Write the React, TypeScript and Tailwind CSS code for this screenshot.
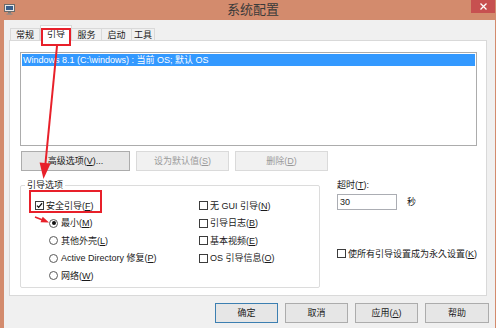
import React from "react";

const FONT = "font-['Liberation_Sans','Noto_Sans_CJK_SC',sans-serif]";

function U({ children }: { children: React.ReactNode }) {
  return <span className="underline underline-offset-[1px]">{children}</span>;
}

function Btn({
  children,
  w,
  disabled,
  focused,
}: {
  children: React.ReactNode;
  w: string;
  disabled?: boolean;
  focused?: boolean;
}) {
  let cls = "border-[#acacac] bg-[#e6e6e6] text-[#1a1a1a]";
  if (disabled) cls = "border-[#dadada] bg-[#f1f1f1] text-[#9a9a9a]";
  if (focused) cls = "border-[#3c7fb1] bg-[#e6e6e6] text-[#1a1a1a]";
  return (
    <div className={`${w} h-[20px] border ${cls} flex items-center justify-center`}>
      {children}
    </div>
  );
}

function CheckBox({ checked, children }: { checked?: boolean; children: React.ReactNode }) {
  return (
    <div className="flex items-center h-[17.5px] whitespace-nowrap">
      <span className="w-[9px] h-[9px] border border-[#3c3c3c] bg-white flex items-center justify-center shrink-0">
        {checked && (
          <svg width="9" height="9" viewBox="0 0 9 9">
            <path d="M1.2 4.6 L3.4 6.8 L7.8 1.6" stroke="#111" strokeWidth="1.6" fill="none" />
          </svg>
        )}
      </span>
      <span className="ml-[2px]">{children}</span>
    </div>
  );
}

function Radio({ checked, children }: { checked?: boolean; children: React.ReactNode }) {
  return (
    <div className="flex items-center h-[17.5px] whitespace-nowrap">
      <span className="w-[9px] h-[9px] rounded-full border border-[#5a5a5a] bg-white flex items-center justify-center shrink-0">
        {checked && <span className="w-[4px] h-[4px] rounded-full bg-[#111]" />}
      </span>
      <span className="ml-[3px]">{children}</span>
    </div>
  );
}

const TABS = [
  { label: "常规", w: "w-[30px]" },
  { label: "引导", w: "w-[32px]", active: true },
  { label: "服务", w: "w-[31px]" },
  { label: "启动", w: "w-[31px]" },
  { label: "工具", w: "w-[24px]" },
];

export default function App() {
  return (
    <div className={`relative w-[496px] h-[328px] overflow-hidden bg-[#d38b6d] ${FONT} text-[9px] leading-[12px] text-[#1a1a1a]`}>
      {/* title bar */}
      <div className="h-[20px] grid grid-cols-[1fr_auto_1fr] items-start">
        <div className="pl-[4px] pt-[4px]">
          <svg width="11" height="11" viewBox="0 0 11 11">
            <rect x="0.5" y="0.5" width="10" height="7" fill="#e8e8e8" stroke="#6b6b6b" />
            <rect x="2" y="2" width="7" height="4" fill="#3a5f8a" />
            <rect x="4" y="8" width="3" height="1.5" fill="#7a7a7a" />
            <rect x="2.5" y="9.5" width="6" height="1.2" fill="#8a8a8a" />
          </svg>
        </div>
        <div className="pl-[10px] pt-[3px] text-[13px] leading-[14px] text-[#3a3a3a]">系统配置</div>
        <div className="flex justify-end pr-[1px]">
          <div className="w-[24px] h-[13px] bg-[#c75050] flex items-center justify-center">
            <svg width="7" height="7" viewBox="0 0 7 7">
              <path d="M0.5 0.5 L6.5 6.5 M6.5 0.5 L0.5 6.5" stroke="#fff" strokeWidth="1.3" />
            </svg>
          </div>
        </div>
      </div>

      {/* client */}
      <div className="ml-[4px] mr-[1px] h-[308px] bg-[#f0f0f0] flex flex-col">
        {/* tabs */}
        <div className="flex items-end pl-[6px] pt-[5px] h-[20px] relative z-10">
          {TABS.map((t) =>
            t.active ? (
              <div
                key={t.label}
                className={`${t.w} h-[16px] -mb-px bg-white border border-b-0 border-[#d9d9d9] flex items-start justify-center pt-[2px]`}
              >
                {t.label}
              </div>
            ) : (
              <div
                key={t.label}
                className={`${t.w} h-[12px] bg-[#f0f0f0] border border-b-0 border-[#d9d9d9] -ml-px first:ml-0 flex items-center justify-center`}
              >
                {t.label}
              </div>
            )
          )}
        </div>

        {/* tab page */}
        <div className="ml-[5px] w-[478px] h-[256px] bg-white border border-[#d9d9d9] pl-[10px] pr-[9px] pt-[11px] flex flex-col">
          <div className="h-[94px] border border-[#acacac] bg-white p-[1px]">
            <div className="h-[12px] bg-[#3399ff] text-white pl-[1px] flex items-center">
              Windows 8.1 (C:\windows) : 当前 OS; 默认 OS
            </div>
          </div>

          <div className="mt-[5px] flex gap-[6px] pl-[1px]">
            <Btn w="w-[109px]">
              高级选项(<U>V</U>)...
            </Btn>
            <Btn w="w-[93px]" disabled>
              设为默认值(<U>S</U>)
            </Btn>
            <Btn w="w-[93px]" disabled>
              删除(<U>D</U>)
            </Btn>
          </div>

          <div className="mt-[8px] flex">
            <fieldset className="w-[308px] h-[109px] border border-[#dcdcdc] rounded-[2px] px-[14px]">
              <legend className="ml-[-10px] px-[2px] leading-[12px]">引导选项</legend>
              <div className="flex mt-[6px]">
                <div className="w-[164px]">
                  <CheckBox checked>
                    安全引导(<U>F</U>)
                  </CheckBox>
                  <div className="pl-[14px]">
                    <Radio checked>
                      最小(<U>M</U>)
                    </Radio>
                    <Radio>
                      其他外壳(<U>L</U>)
                    </Radio>
                    <Radio>
                      Active Directory 修复(<U>P</U>)
                    </Radio>
                    <Radio>
                      网络(<U>W</U>)
                    </Radio>
                  </div>
                </div>
                <div>
                  <CheckBox>
                    无 GUI 引导(<U>N</U>)
                  </CheckBox>
                  <CheckBox>
                    引导日志(<U>B</U>)
                  </CheckBox>
                  <CheckBox>
                    基本视频(<U>E</U>)
                  </CheckBox>
                  <CheckBox>
                    OS 引导信息(<U>O</U>)
                  </CheckBox>
                </div>
              </div>
            </fieldset>

            <div className="ml-[17px] flex flex-col">
              <div>
                超时(<U>T</U>):
              </div>
              <div className="mt-[3px] flex items-center">
                <div className="w-[60px] h-[16px] border border-[#abadb3] bg-white pl-[2px] flex items-center">30</div>
                <span className="ml-[10px]">秒</span>
              </div>
              <div className="mt-[35px]">
                <CheckBox>
                  使所有引导设置成为永久设置(<U>K</U>)
                </CheckBox>
              </div>
            </div>
          </div>
        </div>

        {/* bottom buttons */}
        <div className="mt-[7px] flex justify-end gap-[7px] pr-[6px]">
          <Btn w="w-[63px]" focused>
            确定
          </Btn>
          <Btn w="w-[63px]">取消</Btn>
          <Btn w="w-[63px]">
            应用(<U>A</U>)
          </Btn>
          <Btn w="w-[64px]">帮助</Btn>
        </div>
      </div>

      {/* red annotations */}
      <div className="absolute left-[41px] top-[28px] w-[30px] h-[18px] border-2 border-[#e8202a] z-20" />
      <div className="absolute left-[29px] top-[190px] w-[73px] h-[23px] border-2 border-[#e8202a] z-20" />
      <svg className="absolute inset-0 z-30 pointer-events-none" width="496" height="328" viewBox="0 0 496 328">
        <line x1="57" y1="46" x2="45.3" y2="165" stroke="#e8202a" strokeWidth="2" />
        <polygon points="39.6,162.5 50.6,163.5 43.5,179" fill="#e8202a" />
        <line x1="35" y1="217" x2="42" y2="219.8" stroke="#e8202a" strokeWidth="1.5" />
        <polygon points="40.5,222.3 42.7,216.7 49,222.5" fill="#e8202a" />
      </svg>
    </div>
  );
}
